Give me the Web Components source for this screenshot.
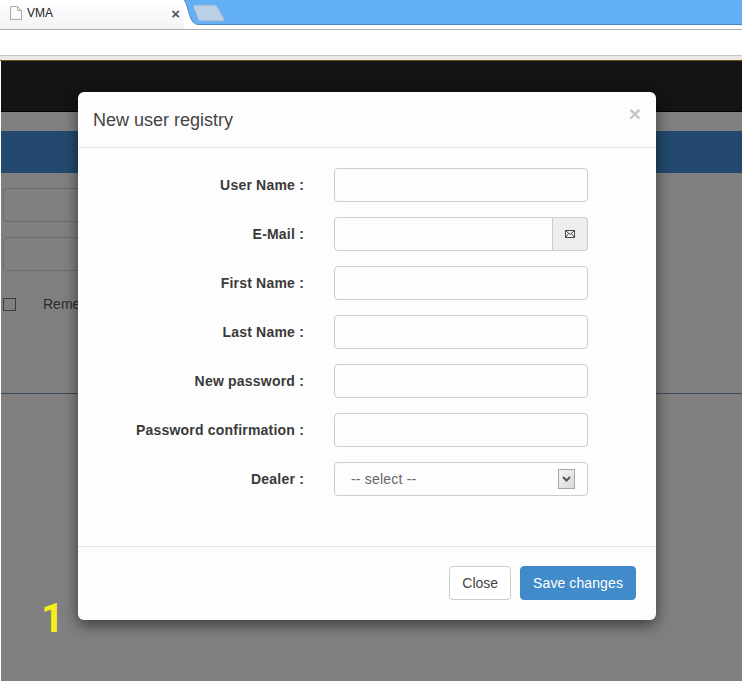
<!DOCTYPE html>
<html>
<head>
<meta charset="utf-8">
<title>VMA</title>
<style>
  html, body { margin: 0; padding: 0; background: #fff; }
  body { font-family: "Liberation Sans", Arial, sans-serif; }
</style>
</head>
<body>
<browser-window>
  <dim-page></dim-page>
  <registry-modal slot="overlay" title-text="New user registry">
    <form-row label="User Name :"></form-row>
    <form-row label="E-Mail :" type="mail"></form-row>
    <form-row label="First Name :"></form-row>
    <form-row label="Last Name :"></form-row>
    <form-row label="New password :"></form-row>
    <form-row label="Password confirmation :"></form-row>
    <form-row label="Dealer :" type="select"></form-row>
  </registry-modal>
</browser-window>

<script>
class BrowserWindow extends HTMLElement {
  constructor() {
    super();

    const root = this.attachShadow( {mode: 'open'} );
    root.innerHTML = `
      <style>
        :host {
          display: flex;
          flex-direction: column;
          width: 742px;
          height: 681px;
          position: relative;
          overflow: hidden;
          background: #fff;
          color: #333;
          font-family: 'Liberation Sans', Arial, sans-serif;
        }

        .strip {
          display: flex;
          flex-direction: row;
          height: 29px;
          border-bottom: 1px solid #aeaeae;
        }

        .tab {
          align-items: center;
          background: linear-gradient( #fff, #f3f3f3 );
          box-sizing: border-box;
          display: flex;
          flex: 0 0 184px;
          font-size: 12px;
          padding: 0 0 3px 10px;
          color: #222;
        }

        .tab span {
          margin-left: 5px;
          flex-grow: 1;
        }

        .tab b {
          color: #555;
          font-size: 15px;
          margin-right: 4px;
        }

        .curve { display: block; flex: 0 0 45px; }

        .rest {
          background: #63aff5;
          border-bottom: 1px solid #4a86bd;
          flex-grow: 1;
          height: 24px;
        }

        .toolbar {
          background: #fff;
          border-bottom: 1px solid #c6c6c6;
          height: 25px;
        }

        .sep {
          background: #e9e9e9;
          border-bottom: 1px solid #7a4f1c;
          height: 4px;
        }

        .page {
          display: flex;
          flex-direction: column;
          flex-grow: 1;
          margin-left: 1px;
          min-height: 0;
        }

        .number {
          color: #f4ee1c;
          font-family: Roboto, sans-serif;
          font-size: 40px;
          font-weight: 700;
          left: 41px;
          line-height: 1;
          position: absolute;
          top: 599px;
        }
      </style>
      <div class="strip">
        <div class="tab">
          <svg width="12" height="14" viewBox="0 0 12 14">
            <path d="M.5.5h7l4 4v9H.5z M7.5.5v4h4" fill="#fbfbfb" stroke="#aaa"/>
          </svg>
          <span>VMA</span>
          <b>&#215;</b>
        </div>
        <svg class="curve" width="45" height="29" viewBox="0 0 45 29">
          <rect width="45" height="29" fill="#fff"/>
          <path d="M0 0H45V24H14C9 24 7 20 5 13C3 6 2 2 0 0Z" fill="#63aff5"/>
          <path d="M0 0C2 2 3 6 5 13C7 20 9 24 14 24.5H45" fill="none" stroke="#4a86bd"/>
          <path d="M11 5H30C32 5 33 6 34 8L40 19C41 20 40 21 38 21H17C15 21 14 20 14 19L9.500 7C9 6 10 5 11 5Z" fill="#b9d0e6" stroke="#8fb2d4"/>
        </svg>
        <div class="rest"></div>
      </div>
      <div class="toolbar"></div>
      <div class="sep"></div>
      <div class="page"><slot></slot></div>
      <div class="number">1</div>
      <slot name="overlay"></slot>
    `;
  }
}

class DimPage extends HTMLElement {
  constructor() {
    super();

    const root = this.attachShadow( {mode: 'open'} );
    root.innerHTML = `
      <style>
        :host {
          background: #808080;
          display: flex;
          flex-direction: column;
          flex-grow: 1;
        }

        .top {
          background: #141414;
          border-bottom: 1px solid #000;
          height: 50px;
        }

        .bar {
          background: #234a6e;
          height: 42px;
          margin-top: 19px;
        }

        .login {
          border-bottom: 1px solid #3a4a58;
          display: flex;
          flex-direction: column;
          gap: 15px;
          height: 205px;
          padding: 15px 0 0 2px;
        }

        .box {
          border: 1px solid #6c6c6c;
          border-radius: 4px;
          box-sizing: border-box;
          height: 34px;
          width: 200px;
        }

        .check {
          align-items: center;
          color: #2b2b2b;
          display: flex;
          font-size: 14px;
          gap: 27px;
          margin-top: 10px;
        }

        .check i {
          border: 1px solid #3c3c3c;
          box-sizing: border-box;
          display: block;
          height: 13px;
          width: 13px;
        }
      </style>
      <div class="top"></div>
      <div class="bar"></div>
      <div class="login">
        <div class="box"></div>
        <div class="box"></div>
        <div class="check"><i></i><span>Reme</span></div>
      </div>
    `;
  }
}

class RegistryModal extends HTMLElement {
  constructor() {
    super();

    const root = this.attachShadow( {mode: 'open'} );
    root.innerHTML = `
      <style>
        :host {
          background: #fdfdfd;
          border-radius: 6px;
          box-shadow: 0 5px 15px rgba( 0, 0, 0, 0.55 );
          display: flex;
          flex-direction: column;
          height: 528px;
          left: 78px;
          position: absolute;
          top: 92px;
          width: 578px;
        }

        header {
          align-items: flex-start;
          border-bottom: 1px solid #e5e5e5;
          box-sizing: border-box;
          display: flex;
          flex: 0 0 56px;
          justify-content: space-between;
          padding: 16px 15px 0 15px;
        }

        h4 {
          color: #444;
          font-size: 18px;
          font-weight: 400;
          line-height: 25px;
          margin: 0;
        }

        header b {
          color: #c6c6c6;
          font-size: 21px;
          line-height: 12px;
        }

        .body {
          display: flex;
          flex-direction: column;
          flex-grow: 1;
          gap: 15px;
          padding: 20px 0 0 0;
        }

        footer {
          border-top: 1px solid #e5e5e5;
          box-sizing: border-box;
          display: flex;
          flex: 0 0 74px;
          gap: 9px;
          justify-content: flex-end;
          padding: 19px 20px 0 0;
        }

        button {
          border: 1px solid #ccc;
          border-radius: 4px;
          background: #fff;
          box-sizing: border-box;
          color: #444;
          font-family: inherit;
          font-size: 14px;
          height: 34px;
          padding: 0 12px;
        }

        button.primary {
          background: #428bca;
          border-color: #3f87c5;
          color: #fff;
          letter-spacing: 0.1px;
        }
      </style>
      <header>
        <h4></h4>
        <b>&#215;</b>
      </header>
      <div class="body"><slot></slot></div>
      <footer>
        <button>Close</button>
        <button class="primary">Save changes</button>
      </footer>
    `;

    root.querySelector( 'h4' ).textContent = this.getAttribute( 'title-text' );
  }
}

class FormRow extends HTMLElement {
  constructor() {
    super();

    const root = this.attachShadow( {mode: 'open'} );
    root.innerHTML = `
      <style>
        :host {
          align-items: center;
          display: flex;
          flex-direction: row;
          height: 34px;
        }

        label {
          color: #3a3a3a;
          font-size: 14px;
          font-weight: 700;
          letter-spacing: 0.2px;
          margin-right: 30px;
          text-align: right;
          width: 226px;
        }

        .field {
          display: flex;
          position: relative;
          width: 254px;
        }

        input, select {
          background: #fdfdfd;
          border: 1px solid #ccc;
          border-radius: 4px;
          box-sizing: border-box;
          color: #666;
          flex-grow: 1;
          font-family: inherit;
          font-size: 14px;
          height: 34px;
          min-width: 0;
          outline: none;
        }

        select {
          appearance: none;
          letter-spacing: 0.2px;
          padding-left: 16px;
        }

        input.joined {
          border-bottom-right-radius: 0;
          border-top-right-radius: 0;
        }

        .addon {
          align-items: center;
          background: #eee;
          border: 1px solid #ccc;
          border-left: 0;
          border-radius: 0 4px 4px 0;
          box-sizing: border-box;
          display: flex;
          flex: 0 0 35px;
          justify-content: center;
        }

        .arrow {
          position: absolute;
          right: 13px;
          top: 7px;
        }
      </style>
      <label></label>
      <div class="field"></div>
    `;

    const type = this.getAttribute( 'type' );
    const field = root.querySelector( '.field' );

    root.querySelector( 'label' ).textContent = this.getAttribute( 'label' );

    if( type === 'select' ) {
      field.innerHTML = `
        <select><option>-- select --</option></select>
        <svg class="arrow" width="17" height="20" viewBox="0 0 17 20">
          <defs>
            <linearGradient id="g" x1="0" y1="0" x2="1" y2="1">
              <stop offset="0" stop-color="#f6f6f6"/>
              <stop offset="1" stop-color="#d8d8d8"/>
            </linearGradient>
          </defs>
          <rect x=".5" y=".5" width="16" height="19" fill="url(#g)" stroke="#a8a8a8"/>
          <path d="M5 8L8.500 11.500L12 8" fill="none" stroke="#555" stroke-width="2"/>
        </svg>
      `;
    } else if( type === 'mail' ) {
      field.innerHTML = `
        <input class="joined" type="text">
        <div class="addon">
          <svg width="10" height="8" viewBox="0 0 10 8">
            <path d="M.5.5h9v7h-9z M.5.500L5 4.500L9.500.5 M.5 7.500L3.500 3.500 M9.500 7.500L6.500 3.500" fill="#fafafa" stroke="#333" stroke-width=".9"/>
          </svg>
        </div>
      `;
    } else {
      field.innerHTML = '<input type="text">';
    }
  }
}

window.customElements.define( 'browser-window', BrowserWindow );
window.customElements.define( 'dim-page', DimPage );
window.customElements.define( 'registry-modal', RegistryModal );
window.customElements.define( 'form-row', FormRow );
</script>
</body>
</html>
